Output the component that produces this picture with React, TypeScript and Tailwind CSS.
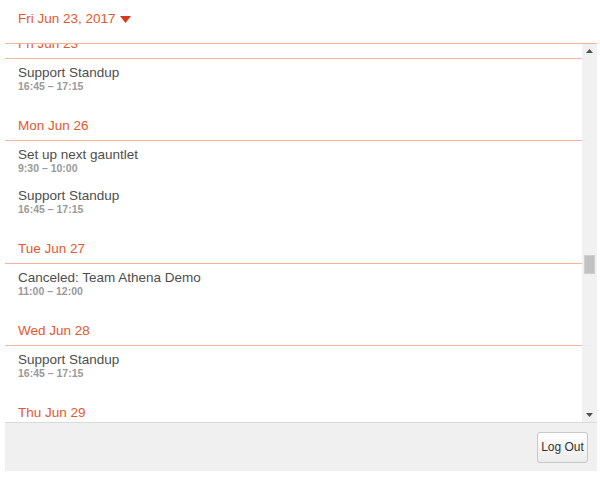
import { useLayoutEffect, useRef } from 'react';

type CalEvent = { title: string; time: string };
type Day = { key: string; label: string; events: CalEvent[] };

const DAY_NAMES = ['Sun', 'Mon', 'Tue', 'Wed', 'Thu', 'Fri', 'Sat'];
const MONTHS = ['Jan', 'Feb', 'Mar', 'Apr', 'May', 'Jun', 'Jul', 'Aug', 'Sep', 'Oct', 'Nov', 'Dec'];

const standup = { title: 'Support Standup', time: '16:45 – 17:15' };

function eventsFor(weekday: number): CalEvent[] {
  switch (weekday) {
    case 1:
      return [{ title: 'Set up next gauntlet', time: '9:30 – 10:00' }, standup];
    case 2:
      return [{ title: 'Canceled: Team Athena Demo', time: '11:00 – 12:00' }];
    case 3:
      return [standup];
    case 4:
      return [{ title: 'Design Review', time: '14:00 – 15:00' }];
    case 5:
      return [standup];
    default:
      return [];
  }
}

// weekdays from Apr 24 to Aug 4, 2017
function buildDays(): Day[] {
  const days: Day[] = [];
  const start = Date.UTC(2017, 3, 24);
  const end = Date.UTC(2017, 7, 4);
  for (let t = start; t <= end; t += 86400000) {
    const d = new Date(t);
    const events = eventsFor(d.getUTCDay());
    if (!events.length) continue;
    days.push({
      key: `${d.getUTCMonth()}-${d.getUTCDate()}`,
      label: `${DAY_NAMES[d.getUTCDay()]} ${MONTHS[d.getUTCMonth()]} ${d.getUTCDate()}`,
      events,
    });
  }
  return days;
}

const days = buildDays();

function ScrollArrow({ up }: { up?: boolean }) {
  return (
    <div className="h-[14px] flex items-center justify-center">
      <svg width="7" height="4" viewBox="0 0 7 4">
        <path d={up ? 'M0 4 L3.5 0 L7 4 Z' : 'M0 0 L3.5 4 L7 0 Z'} fill="#505050" />
      </svg>
    </div>
  );
}

export default function App() {
  const listRef = useRef<HTMLDivElement>(null);
  const todayRef = useRef<HTMLDivElement>(null);

  useLayoutEffect(() => {
    if (listRef.current && todayRef.current) {
      listRef.current.scrollTop = todayRef.current.offsetTop + 26;
    }
  }, []);

  return (
    <div className="min-h-screen bg-white pl-[5px] font-['Liberation_Sans',Arial,sans-serif]">
      <div className="w-[592px]">
        <div className="h-[43px] pl-[13px] pt-[11px] flex items-start">
          <button type="button" className="flex items-center gap-[4px] text-[13.5px] leading-[16px] text-[#e4582d]">
            Fri Jun 23, 2017
            <svg width="11" height="7" viewBox="0 0 11 7" className="mt-[1px]">
              <path d="M0 0 H11 L5.5 7 Z" fill="#d6391b" />
            </svg>
          </button>
        </div>

        <div className="flex h-[379px] border-t border-[#f6b39b]">
          <div ref={listRef} className="relative flex-1 overflow-hidden">
            {days.map((day) => (
              <div key={day.key} ref={day.key === '5-23' ? todayRef : undefined}>
                <div className="h-[41px] border-b border-[#f6b39b] pl-[13px] pt-[18px]">
                  <div className="text-[13.5px] leading-[16px] text-[#e4582d]">{day.label}</div>
                </div>
                {day.events.map((ev, i) => (
                  <div key={i} className="h-[41px] pl-[13px] pt-[6px]">
                    <div className="text-[13.5px] leading-[16px] text-[#4e4e4e]">{ev.title}</div>
                    <div className="text-[10.5px] leading-[11px] font-bold text-[#9a9a9a]">{ev.time}</div>
                  </div>
                ))}
              </div>
            ))}
          </div>

          <div className="w-[15px] bg-[#f1f1f1] flex flex-col">
            <ScrollArrow up />
            <div className="flex-1 px-[2px]">
              <div className="mt-[197px] h-[19px] bg-[#c1c1c1] border border-[#cfcfcf]" />
            </div>
            <ScrollArrow />
          </div>
        </div>

        <div className="h-[49px] border-t border-[#dadada] bg-[#f0f0f0] flex items-center justify-end pr-[9px]">
          <button
            type="button"
            className="h-[31px] w-[51px] rounded-[3px] border border-[#c8c8c8] bg-gradient-to-b from-white to-[#ececec] text-[12px] text-[#333]"
          >
            Log Out
          </button>
        </div>
      </div>
    </div>
  );
}
